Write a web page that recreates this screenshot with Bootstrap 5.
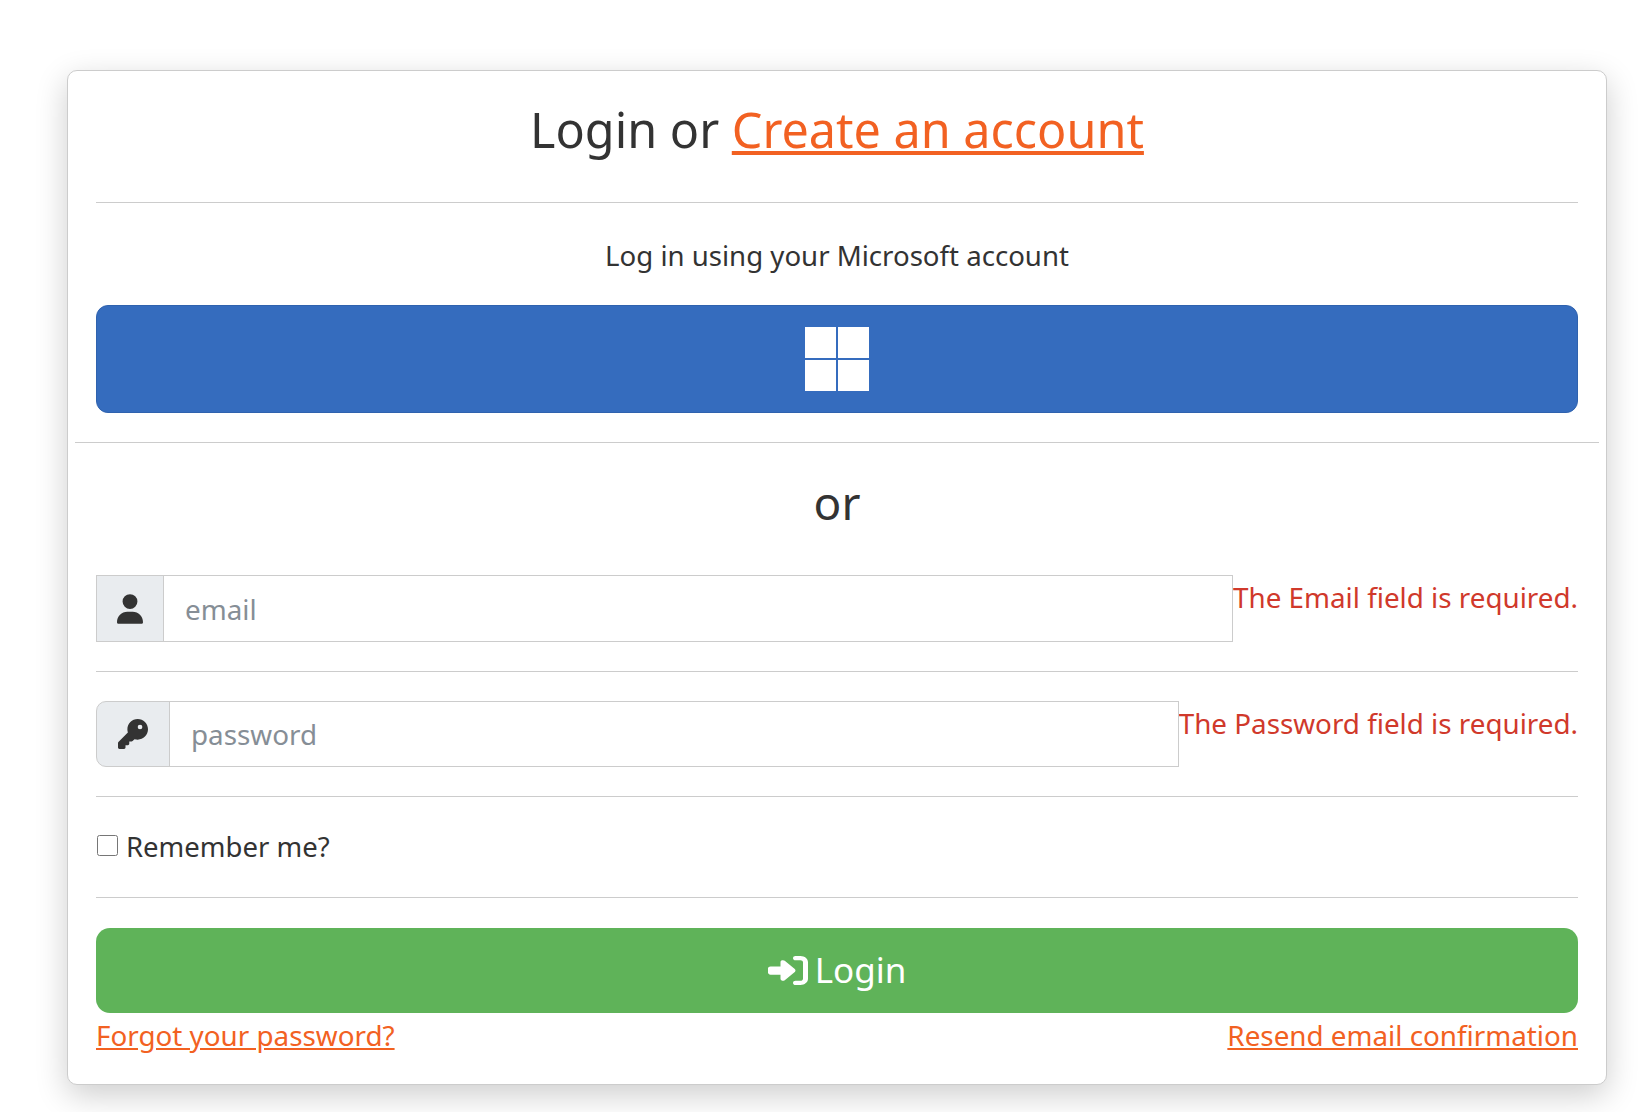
<!DOCTYPE html>
<html lang="en">
<head>
    <meta charset="UTF-8">
    <meta name="viewport" content="width=device-width, initial-scale=1.0">
    <title>Login</title>
    <link href="https://cdn.jsdelivr.net/npm/bootstrap@5.3.0/dist/css/bootstrap.min.css" rel="stylesheet">
    <style>
        body { font-family: "Noto Sans", "DejaVu Sans", sans-serif; font-size: 27.5px; color: #333; background: #fff; }
        .login-wrap { padding: 70px 31px 40px 67px; }
        .login-box { border: 1px solid #ccc; border-radius: 10px; box-shadow: 0 10px 32px rgba(0,0,0,.2); padding: 0 28px 27px; background: #fff; }
        .login-box hr { margin: 0; border-color: #ccc; opacity: 1; }
        .login-title { font-size: 48.5px; font-weight: 400; text-align: center; margin: 0; padding: 29px 0 44px; line-height: 58px; }
        .login-link { color: #f26122; }
        .ms-text { text-align: center; padding: 32px 0 30px; line-height: 40px; margin: 0; font-size: 27.6px; }
        .ms-btn { background: #356cbe; border: 1px solid #2f62ae; border-radius: 12px; height: 108px; width: 100%; }
        .or-line { margin: 29px -21px 0; border-top: 1px solid #ccc; }
        .or-text { font-size: 46px; text-align: center; padding: 25px 0 39px; line-height: 68px; margin: 0; }
        .field-row { display: flex; align-items: flex-start; padding-bottom: 29px; }
        .pass-row { padding-top: 29px; }
        .field-row .input-group { flex: 1; width: auto; }
        .field-row .input-group-text { background: #e9ecef; border-color: #ccc; justify-content: center; }
        .field-row .form-control { height: 67px; font-size: 27.8px; border-color: #ccc; padding-left: 21px; }
        .field-row .form-control::placeholder { color: #868e96; }
        .email-group .input-group-text { width: 68px; border-radius: 0; }
        .email-group .form-control { border-radius: 0; }
        .pass-group .input-group-text { width: 74px; border-radius: 10px 0 0 10px; }
        .pass-group .form-control { border-radius: 0; height: 66px; }
        .field-err { color: #d0392b; font-size: 27.8px; line-height: 44px; white-space: nowrap; }
        .remember { display: flex; align-items: center; padding: 28px 0 28px; line-height: 44px; margin: 0; }
        .remember input { width: 21px; height: 21px; margin: 0 8px 4px 1px; }
        .login-btn { background: #5fb359; border: 0; border-radius: 14px; height: 85px; width: 100%; margin-top: 30px; color: #fff; font-size: 35px; display: flex; align-items: center; justify-content: center; gap: 7px; }
        .login-foot { display: flex; justify-content: space-between; line-height: 44px; font-size: 27.8px; }
    </style>
</head>
<body>
<div class="login-wrap">
    <div class="login-box">
        <h2 class="login-title">Login or <a href="#" class="login-link">Create an account</a></h2>
        <hr>
        <p class="ms-text">Log in using your Microsoft account</p>
        <button type="button" class="ms-btn d-flex align-items-center justify-content-center">
            <svg width="64" height="64" viewBox="0 0 64 64" fill="#fff"><rect width="31" height="31"/><rect x="33" width="31" height="31"/><rect y="33" width="31" height="31"/><rect x="33" y="33" width="31" height="31"/></svg>
        </button>
        <div class="or-line"></div>
        <p class="or-text">or</p>
        <div class="field-row">
            <div class="input-group email-group">
                <span class="input-group-text">
                    <svg width="26" height="30" viewBox="0 0 448 512" fill="#333"><path d="M224 256a128 128 0 1 0 0-256 128 128 0 1 0 0 256zm-45.7 48C79.8 304 0 383.8 0 482.3 0 498.7 13.3 512 29.7 512h388.6c16.4 0 29.7-13.3 29.7-29.7C448 383.8 368.2 304 269.7 304h-91.4z"/></svg>
                </span>
                <input type="text" class="form-control" placeholder="email">
            </div>
            <span class="field-err">The Email field is required.</span>
        </div>
        <hr>
        <div class="field-row pass-row">
            <div class="input-group pass-group">
                <span class="input-group-text">
                    <svg width="30" height="30" viewBox="0 0 512 512" fill="#333"><path d="M336 352c97.2 0 176-78.8 176-176S433.2 0 336 0 160 78.800 160 176c0 18.700 2.900 36.800 8.300 53.700L7 391c-4.500 4.500-7 10.600-7 17v80c0 13.300 10.700 24 24 24h80c13.300 0 24-10.700 24-24v-40h40c13.300 0 24-10.700 24-24v-40h40c6.400 0 12.500-2.500 17-7l33.300-33.300c16.900 5.400 35 8.300 53.700 8.300zM376 96a40 40 0 1 1 0 80 40 40 0 1 1 0-80z"/></svg>
                </span>
                <input type="password" class="form-control" placeholder="password">
            </div>
            <span class="field-err">The Password field is required.</span>
        </div>
        <hr>
        <label class="remember"><input type="checkbox">Remember me?</label>
        <hr>
        <button type="button" class="login-btn">
            <svg width="40" height="33" viewBox="0 0 512 512" preserveAspectRatio="none" fill="#fff"><path d="M352 96h64c17.700 0 32 14.300 32 32v256c0 17.700-14.300 32-32 32h-64c-17.700 0-32 14.300-32 32s14.300 32 32 32h64c53 0 96-43 96-96V128c0-53-43-96-96-96h-64c-17.700 0-32 14.300-32 32s14.300 32 32 32zm-9.400 182.600c12.500-12.500 12.500-32.800 0-45.300l-128-128c-9.200-9.200-22.900-11.900-34.900-6.900S160 115.100 160 128v64H32c-17.700 0-32 14.300-32 32v64c0 17.700 14.300 32 32 32h128v64c0 12.900 7.800 24.600 19.800 29.600s25.700 2.200 34.900-6.900l128-128z"/></svg>
            Login
        </button>
        <div class="login-foot">
            <a href="#" class="login-link">Forgot your password?</a>
            <a href="#" class="login-link">Resend email confirmation</a>
        </div>
    </div>
</div>
<script src="https://cdn.jsdelivr.net/npm/bootstrap@5.3.0/dist/js/bootstrap.bundle.min.js"></script>
</body>
</html>
